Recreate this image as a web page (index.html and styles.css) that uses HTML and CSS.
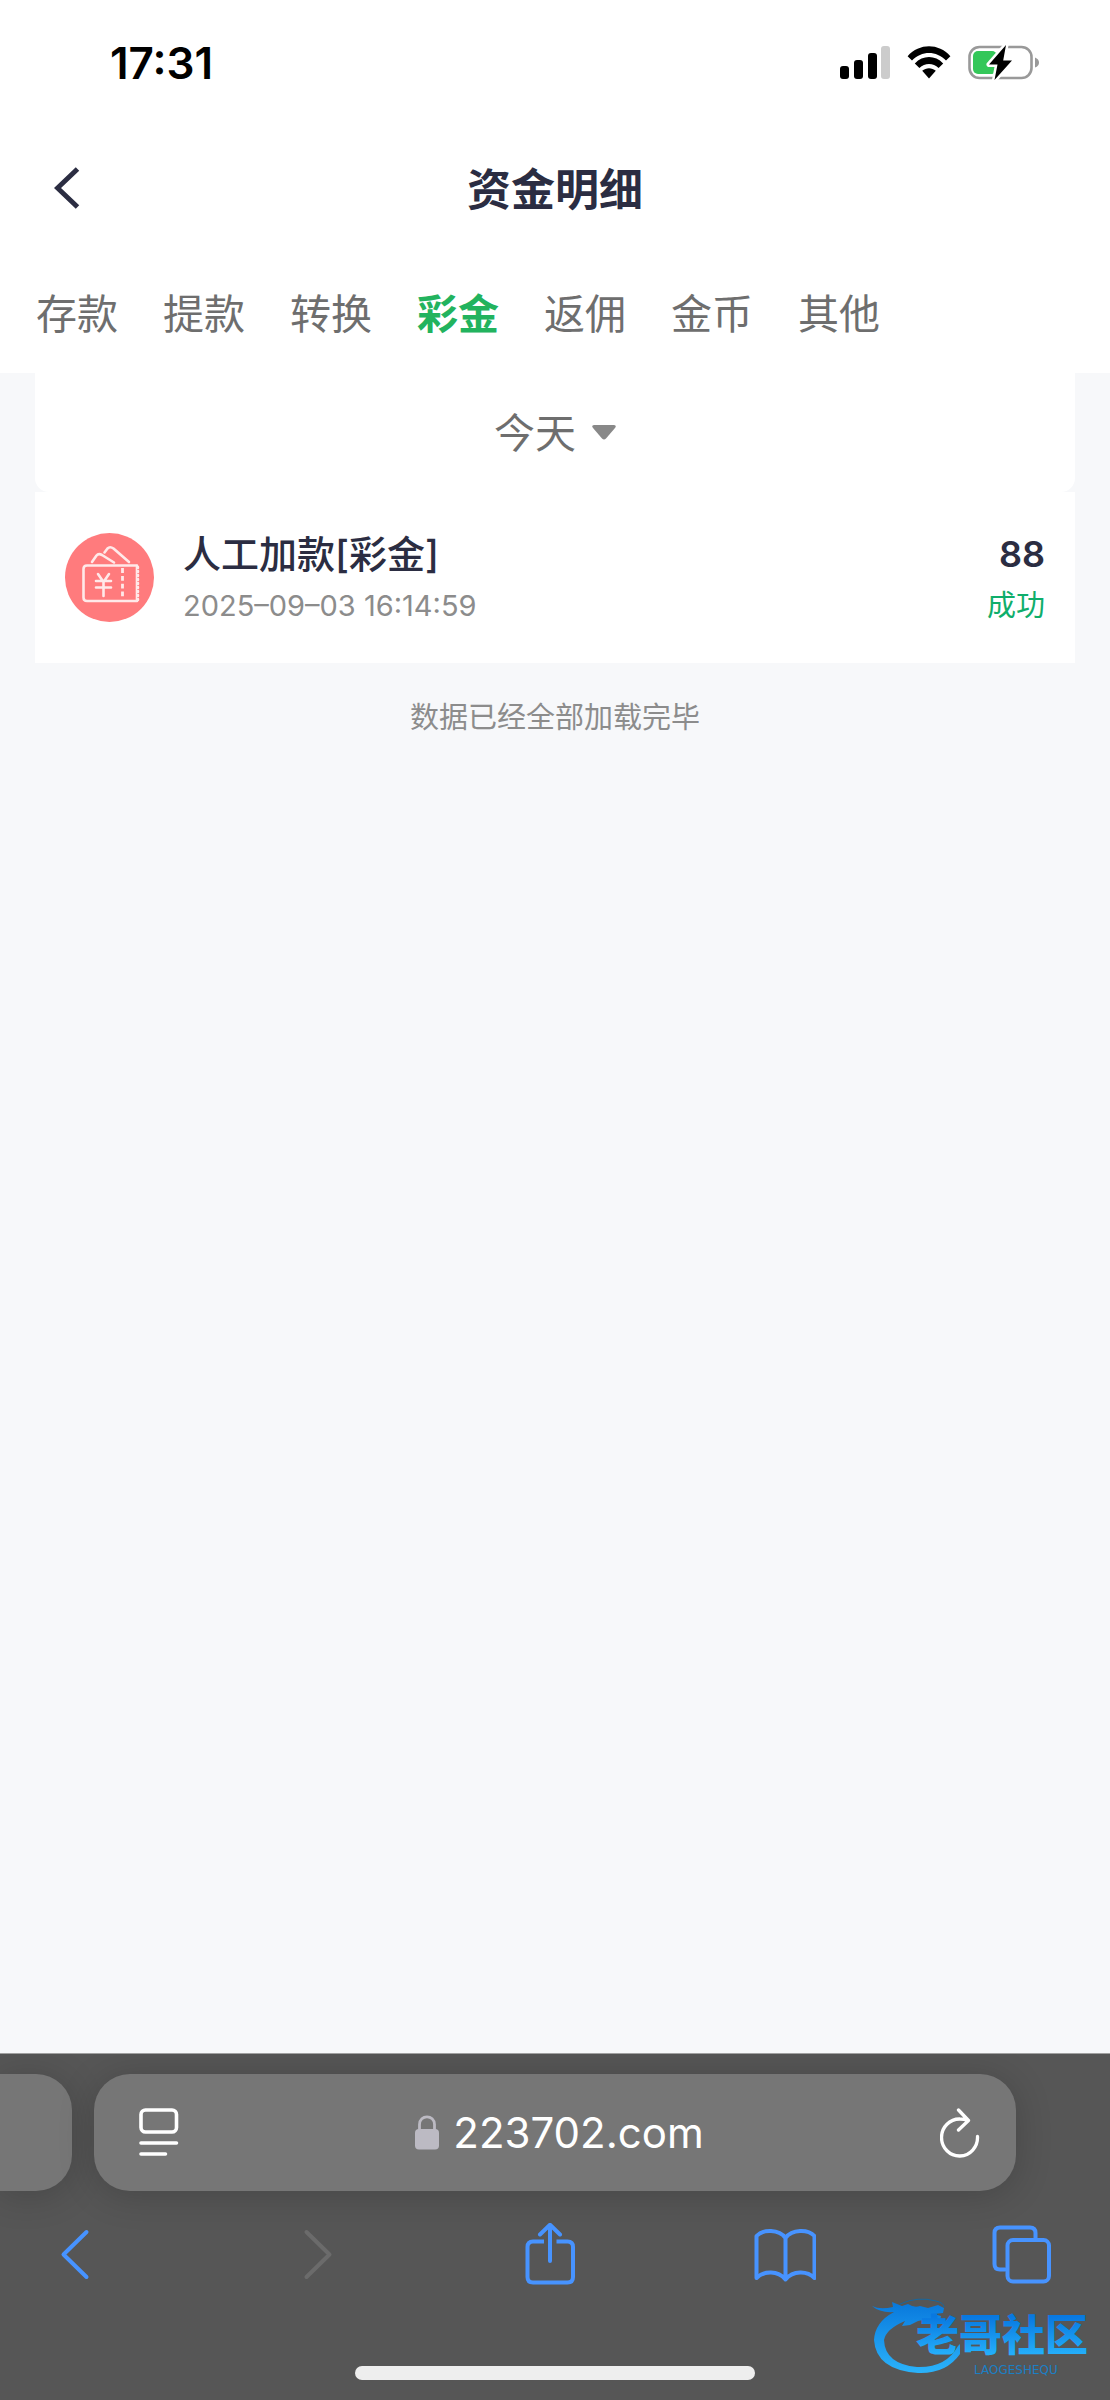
FILE: index.html
```html
<!DOCTYPE html>
<html lang="zh-CN">
<head>
<meta charset="utf-8">
<meta name="viewport" content="width=device-width, initial-scale=1">
<title>资金明细</title>
<link rel="stylesheet" href="styles.css">
</head>
<body>
<header class="top">
  <div class="status">
    <time class="clock">17:31</time>
    <div class="status-icons">
      <svg width="50" height="34" viewBox="0 0 50 34" aria-hidden="true">
        <rect x="0" y="20" width="9" height="13" rx="3"/>
        <rect x="14" y="14" width="9" height="19" rx="3"/>
        <rect x="28" y="7" width="9" height="26" rx="3"/>
        <rect x="41" y="0" width="9" height="33" rx="3" fill="#ccc"/>
      </svg>
      <svg width="44" height="34" viewBox="0 0 44 34" aria-hidden="true">
        <path d="M0.6 10.2C12.5-3 31.500-3 43.400 10.200L39 14.600C29.500 4.600 14.500 4.600 5 14.600Z"/>
        <path d="M7.800 17.400C16 9 28 9 36.200 17.400L31.600 22C26.200 16.600 17.800 16.600 12.400 22Z"/>
        <path d="M15.200 24.800C19.200 21.400 24.800 21.400 28.800 24.800L22 32.500Z"/>
      </svg>
      <svg width="72" height="36" viewBox="0 0 72 36" aria-hidden="true">
        <rect x="1.500" y="2" width="62" height="31" rx="10" fill="none" stroke="#999" stroke-width="2.600"/>
        <path d="M67 12.500Q71 14 71 17.500T67 22.500Z" fill="#999"/>
        <rect x="5" y="6" width="24" height="23" rx="5" fill="#34c759"/>
        <path d="M38 0L21 19.500H29.500L26.500 35L44 15.500H35.200Z" stroke="#fff" stroke-width="5" stroke-linejoin="round"/>
        <path d="M38 0L21 19.500H29.500L26.500 35L44 15.500H35.200Z"/>
      </svg>
    </div>
  </div>
  <div class="title-bar">
    <button class="back" type="button" aria-label="返回">
      <svg width="26" height="42" viewBox="0 0 26 42"><path d="M23.500 2L3.500 21L23.500 40" fill="none" stroke="#2b2d42" stroke-width="5"/></svg>
    </button>
    <h1 class="title">资金明细</h1>
  </div>
  <nav class="tabs">
    <a class="tab" href="#deposit">存款</a>
    <a class="tab" href="#withdraw">提款</a>
    <a class="tab" href="#transfer">转换</a>
    <a class="tab tab-active" href="#bonus" aria-current="page">彩金</a>
    <a class="tab" href="#rebate">返佣</a>
    <a class="tab" href="#coin">金币</a>
    <a class="tab" href="#other">其他</a>
  </nav>
</header>

<main class="content">
  <div class="filter">
    <button class="filter-button" type="button">今天
      <svg width="24" height="15" viewBox="0 0 24 15" aria-hidden="true"><path d="M2 0H22Q25 0.500 23 3L14 13.500Q12 15.500 10 13.500L1 3Q-1 0.500 2 0Z" fill="#888"/></svg>
    </button>
  </div>
  <ul class="records">
    <li class="record">
      <svg class="record-icon" width="89" height="89" viewBox="0 0 89 89" aria-hidden="true">
        <circle cx="44.500" cy="44.500" r="44.500" fill="#ff7b7d"/>
        <g fill="none" stroke="#ffe9e9" stroke-width="2.600" stroke-linecap="round" stroke-linejoin="round">
          <path d="M72 32.500H22Q18.500 32.500 18.500 36V64.500Q18.500 68 22 68H72"/>
          <path d="M71.500 32.500V68" stroke-width="1.600"/>
          <path d="M73 34V68" stroke-dasharray="1 3" stroke-width="2.400"/>
          <path d="M27 29L31.500 22.500Q33.500 20 37 22L49 29.500M39.500 19.500L42.500 15.500Q45 13 48.500 15.500L64 29"/>
          <path d="M33 41L38.500 49L44 41M31 48H46M31 54.500H46M38.500 49V63"/>
          <path d="M57.500 36.500V64" stroke-dasharray="2 5.800" stroke-width="2.800" stroke-linecap="square"/>
        </g>
      </svg>
      <div class="record-main">
        <h2 class="record-name">人工加款[彩金]</h2>
        <time class="record-time">2025–09–03 16:14:59</time>
      </div>
      <div class="record-side">
        <strong class="record-amount">88</strong>
        <span class="record-state">成功</span>
      </div>
    </li>
  </ul>
  <p class="end-note">数据已经全部加载完毕</p>
</main>

<footer class="browser">
  <div class="address-row">
    <div class="previous-page"></div>
    <div class="address">
      <button class="plain" type="button" aria-label="页面设置">
        <svg width="40" height="50" viewBox="0 0 40 50" fill="none" stroke="#fff" stroke-width="3.600" stroke-linecap="round"><rect x="2" y="2" width="35.500" height="22" rx="4.500"/><path d="M2 35H37.500M2 46H26.500"/></svg>
      </button>
      <button class="plain url" type="button">
        <svg width="24" height="35" viewBox="0 0 24 35" aria-hidden="true"><rect y="14" width="24" height="20.500" rx="4" fill="#bcbac3"/><path d="M4.500 16V9.500C4.500-0.800 19.500-0.800 19.500 9.500V16" fill="none" stroke="#bcbac3" stroke-width="2.800"/></svg>
        <span>223702.com</span>
      </button>
      <button class="plain" type="button" aria-label="重新载入">
        <svg width="40" height="50" viewBox="0 0 40 50" fill="none" stroke="#fff" stroke-width="3.300" stroke-linecap="round" stroke-linejoin="round"><path d="M37.500 28.500A18 18.500 0 1 1 20 11Q24 11 28 12.500M18.500 2L28.500 12.500L18.500 22"/></svg>
      </button>
    </div>
  </div>
  <nav class="tools">
    <button class="tool" type="button" aria-label="后退">
      <svg width="62" height="62" viewBox="0 0 62 62"><path d="M42.500 9L19.500 31.500L42.500 54"/></svg>
    </button>
    <button class="tool" type="button" aria-label="前进" disabled>
      <svg width="62" height="62" viewBox="0 0 62 62"><path d="M25.500 9L48.500 31.500L25.500 54"/></svg>
    </button>
    <button class="tool" type="button" aria-label="分享">
      <svg width="62" height="62" viewBox="0 0 62 62"><path d="M26 18.500H15Q9.500 18.500 9.500 24V54Q9.500 59.500 15 59.500H49.500Q55 59.500 55 54V24Q55 18.500 49.500 18.500H38.500" stroke-linecap="butt"/><path d="M32 38V2M22 11.500L32 1.800L42 11.500"/></svg>
    </button>
    <button class="tool" type="button" aria-label="书签">
      <svg width="62" height="62" viewBox="0 0 62 62"><path d="M31.500 15C25 6 9 6 2.500 13V55C10 47.500 24 47.500 31.500 56.500C39 47.500 53 47.500 60.500 55V13C54 6 38 6 31.500 15V56.500"/></svg>
    </button>
    <button class="tool" type="button" aria-label="标签页">
      <svg width="62" height="62" viewBox="0 0 62 62"><path d="M14 46.500H9Q3.500 46.500 3.500 41V10Q3.500 4.500 9 4.500H39Q44.500 4.500 44.500 10V16"/><rect x="16.500" y="17" width="41.500" height="41.500" rx="5.500"/></svg>
    </button>
  </nav>
  <div class="home-indicator"></div>
  <svg class="watermark" width="224" height="80" viewBox="0 0 224 80" role="img" aria-label="老哥社区">
    <defs>
      <linearGradient id="ring" x1="0" y1="0" x2="0" y2="1"><stop offset="0" stop-color="#0878dc"/><stop offset="1" stop-color="#2bb3fb"/></linearGradient>
      <linearGradient id="letters" x1="0" y1="0" x2="0" y2="1"><stop offset="0.250" stop-color="#0878e0"/><stop offset="0.850" stop-color="#24aefa"/></linearGradient>
    </defs>
    <path fill="url(#ring)" d="M0 8Q8 12 21 9L20 4L30 8L36 6Q42 10 48 8L56 10L66 7L72 10L71 15L62 16L69 18L68 23L56 21L46 23L38 27L30 28L33 23Q14 31 12 42Q13 66 45 69Q74 70 86 48L88 46L88 56Q74 76 46 75Q4 72 2 42Q3 24 22 14Q8 15 0 8Z"/>
    <path d="M28 6Q46-2 64 3Q72 5 72 9" fill="none" stroke="#17679f" stroke-width="1"/>
    <text class="mark-name" x="44" y="53" fill="url(#letters)">老哥社区</text>
    <text class="mark-sub" x="102" y="76">LAOGESHEQU</text>
  </svg>
</footer>
</body>
</html>
```
FILE: styles.css
```css
* {
  box-sizing: border-box;
}

body {
  margin: 0;
  min-height: 100vh;
  display: flex;
  flex-direction: column;
  background: #f7f8fa;
  color: #2b2d42;
  font-family: Inter, "Noto Sans CJK SC", sans-serif;
}

button {
  border: 0;
  padding: 0;
  background: none;
  color: inherit;
  font: inherit;
}

svg {
  display: block;
  flex: none;
}

.top {
  background: #fff;
}

.status {
  display: flex;
  align-items: center;
  justify-content: space-between;
  height: 126px;
  padding: 0 70px 0 110px;
}

.clock {
  color: #000;
  font-size: 44px;
  font-weight: 600;
  line-height: 48px;
}

.status-icons {
  display: flex;
  align-items: center;
  gap: 17px;
}

.title-bar {
  display: grid;
  grid-template-columns: 1fr auto 1fr;
  align-items: center;
  height: 128px;
  padding: 0 54px;
}

.back {
  justify-self: start;
  padding-bottom: 4px;
}

.title {
  margin: 0;
  font-size: 44px;
  font-weight: 700;
  line-height: 60px;
}

.tabs {
  display: flex;
  gap: 45px;
  height: 119px;
  padding: 30px 36px;
}

.tab {
  color: #6e6e6e;
  font-size: 41px;
  line-height: 60px;
  text-decoration: none;
}

.tab-active {
  color: #22b35e;
  font-weight: 700;
}

.content {
  flex: 1;
  padding: 0 35px;
}

.filter {
  display: flex;
  justify-content: center;
  height: 119px;
  border-radius: 0 0 14px 14px;
  background: #fff;
}

.filter-button {
  display: flex;
  align-items: center;
  gap: 16px;
  color: #6e6e6e;
  font-size: 41px;
  line-height: 60px;
}

.records {
  margin: 0;
  padding: 0;
  list-style: none;
}

.record {
  display: flex;
  align-items: center;
  gap: 29px;
  padding: 34px 30px;
  background: #fff;
}

.record-main,
.record-side {
  display: flex;
  flex-direction: column;
}

.record-side {
  align-items: flex-end;
  margin-left: auto;
}

.record-name,
.record-amount {
  margin: 0;
  font-size: 38px;
  font-weight: 500;
  line-height: 56px;
}

.record-amount {
  font-size: 36px;
  font-weight: 600;
}

.record-time,
.record-state {
  color: #8c8c8c;
  font-size: 29px;
  line-height: 47px;
}

.record-state {
  color: #0fae6b;
}

.end-note {
  margin: 31px 0;
  color: #8c8c8c;
  font-size: 29px;
  line-height: 47px;
  text-align: center;
}

.browser {
  position: relative;
  padding: 20px 0;
  border-top: 1px solid #a0a0a0;
  background: #565656;
  overflow: hidden;
}

.address-row {
  display: flex;
  gap: 22px;
  height: 117px;
  padding-right: 94px;
}

.previous-page,
.address {
  background: #767676;
  box-shadow: 0 4px 36px rgba(0, 0, 0, 0.18);
}

.previous-page {
  width: 72px;
  border-radius: 0 36px 36px 0;
}

.address {
  flex: 1;
  display: flex;
  align-items: center;
  justify-content: space-between;
  padding: 0 36px 0 45px;
  border-radius: 36px;
}

.url {
  display: flex;
  align-items: center;
  gap: 14px;
  color: #fff;
  font-size: 42px;
  line-height: 60px;
}

.tools {
  display: flex;
  justify-content: space-between;
  padding: 32px 57px 0 44px;
}

.tool {
  color: #4793ff;
}

.tool:disabled {
  color: #6b6b6b;
}

.tool svg {
  fill: none;
  stroke: currentColor;
  stroke-width: 4px;
  stroke-linecap: round;
  stroke-linejoin: round;
}

.home-indicator {
  width: 36%;
  height: 14px;
  margin: 81px auto 0;
  border-radius: 7px;
  background: #eee;
}

.watermark {
  position: absolute;
  right: 14px;
  bottom: 22px;
}

.mark-name {
  font-family: "Noto Sans CJK SC", sans-serif;
  font-size: 43px;
  font-weight: 900;
}

.mark-sub {
  fill: #1b7fc4;
  font-family: "DejaVu Sans", sans-serif;
  font-size: 12px;
}
```
